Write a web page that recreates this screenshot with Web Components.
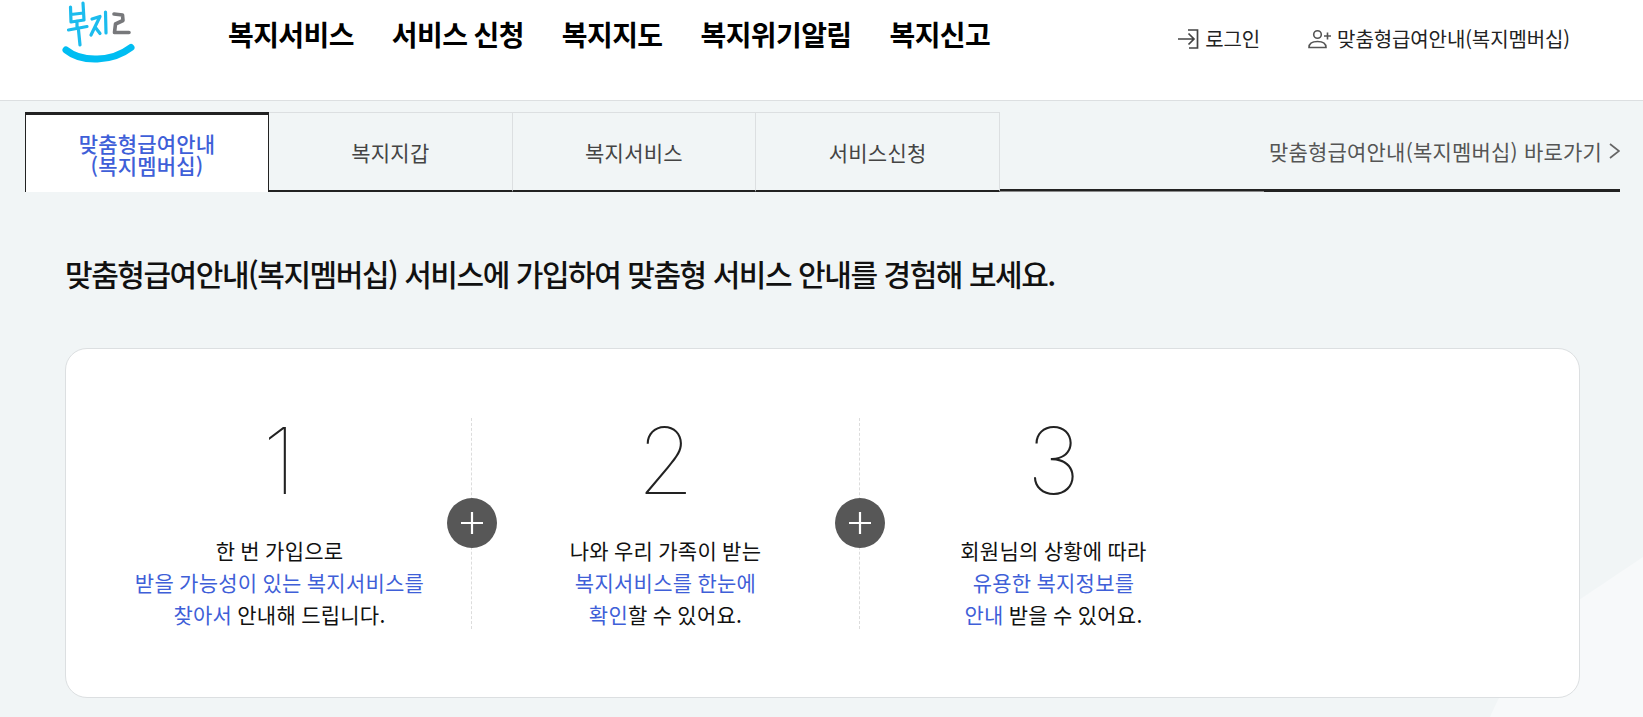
<!DOCTYPE html>
<html lang="ko"><head><meta charset="utf-8"><style>
html,body{margin:0;padding:0;height:717px;overflow:hidden;background:#f1f5f6;}
body{font-family:"Noto Sans CJK KR","Noto Sans",sans-serif;color:#111;}
</style></head><body>
<site-header></site-header>
<welfare-page></welfare-page>
<script>
function def(name,html){customElements.define(name,class extends HTMLElement{constructor(){super();this.attachShadow({mode:'open'}).innerHTML=html;}});}
def('brand-logo',`<style>:host{display:block;width:80px;height:70px}svg{display:block}</style>
<svg width="80" height="70" viewBox="60 0 80 70" fill="none" stroke-linecap="round" stroke-linejoin="round"><g stroke="#1bbcee" stroke-width="3.2">
<path d="M70.5 7L71 22M83 3L84 20M71 14.5L83.5 13M71 22L84 20M77 21V27M68.5 30L87 26.5M78.5 30L80 45"/>
<path d="M92 19L100 16.5L91 35M95 27L100 33.5M105.5 12L106 33"/></g>
<path d="M114 14L122.5 15L123 20.5L115.5 24L114.5 32.5L129 32.5" stroke="#77787b" stroke-width="3.6"/>
<path d="M66 50C82 63 112 62 131 47.5" stroke="#00bdf2" stroke-width="7"/></svg>`);
def('site-header',`<style>:host{display:flex;height:100px;background:#fff;border-bottom:1px solid #dcdfe1}
.logo{margin-left:60px;width:168px}
nav{display:flex;gap:38px;font-size:28px;font-weight:700;line-height:40px;height:40px;margin-top:14px;color:#000;letter-spacing:-.6px;word-spacing:-1px;white-space:nowrap}
.util{display:flex;gap:48px;font-size:20px;line-height:28px;margin:25px 73px 0 auto;height:28px;color:#222;letter-spacing:-.1px;white-space:nowrap}
.util span{display:flex;align-items:center;gap:6px}
.util span+span{gap:5px}
</style><div class="logo"><brand-logo></brand-logo></div>
<nav><span>복지서비스</span><span>서비스 신청</span><span>복지지도</span><span>복지위기알림</span><span>복지신고</span></nav>
<div class="util"><span><svg width="21" height="22" viewBox="0 0 21 22" fill="none" stroke="#444" stroke-width="1.7"><path d="M0 11H16M10.5 5.5L16 11L10.5 16.5M10 2H19.5V20H11"/></svg>로그인</span>
<span><svg width="24" height="22" viewBox="0 0 24 22" fill="none" stroke="#555" stroke-width="1.6"><circle cx="9.5" cy="6.5" r="3.8"/><path d="M1 19.5C1 15.5 4.5 13.5 9.5 13.5S18 15.5 18 19.5ZM16 8H23M19.5 4.5V11.5"/></svg>맞춤형급여안내(복지멤버십)</span></div>`);
def('tab-bar',`<style>:host{display:flex;height:80px;margin:11px 23px 0 25px;align-items:stretch}
.fill{flex:1;border-bottom:2px solid #222;margin-bottom:1px;box-shadow:0 1px 0 #8a8a8a}
.link{width:356px;box-sizing:border-box;border-bottom:3px solid #222;display:flex;justify-content:flex-end;align-items:center;font-size:21px;color:#555;letter-spacing:.2px;white-space:nowrap}
.link svg{margin-left:7px;flex:none}
</style><slot></slot><div class="fill"></div><div class="link"><span>맞춤형급여안내(복지멤버십) 바로가기</span><svg width="11" height="16" viewBox="0 0 11 16" fill="none" stroke="#666" stroke-width="1.7"><path d="M1 1L10 8L1 15"/></svg></div>`);
def('tab-item',`<style>:host{display:flex;width:243.67px;flex:none;box-sizing:border-box;align-items:center;justify-content:center;text-align:center;font-size:21px;line-height:22px;letter-spacing:.25px;color:#444;border-top:1px solid #dcdfe1;border-right:1px solid #dcdfe1;border-bottom:2px solid #222}
:host([active]){background:#fff;color:#3f5fd8;font-weight:500;border:0;border-left:1.5px solid #222;border-right:1.5px solid #222;border-top:3px solid #222;width:244px;letter-spacing:.2px}
</style><slot></slot>`);
def('step-sep',`<style>:host{display:block;flex:none;width:0;height:211px;border-left:1px dashed #dcdcdc;position:relative}
i{position:absolute;left:-25px;top:80px;width:50px;height:50px;border-radius:50%;background:#575757;display:flex;align-items:center;justify-content:center}
</style><i><svg width="24" height="24" viewBox="0 0 24 24" stroke="#fff" stroke-width="2.2"><path d="M1 12H23M12 1V23"/></svg></i>`);
customElements.define('welfare-step',class extends HTMLElement{constructor(){super();const s=this.attachShadow({mode:'open'});s.innerHTML=`<style>:host{display:block;flex:none;width:387px;text-align:center;height:211px}
.n{font-family:"Inter","Noto Sans",sans-serif;font-weight:100;font-size:92px;line-height:86px;height:116px;color:#222}
p{margin:0;font-size:21px;line-height:32px;color:#111;letter-spacing:.25px;word-spacing:-1px;white-space:nowrap}
</style><div class="n">${this.getAttribute('n')}</div><p><slot></slot></p>`;}});
def('welfare-page',`<style>:host{display:block;position:relative;height:616px;overflow:hidden}
.bg{position:absolute;left:0;top:0}
.in{position:relative}
h2{margin:61px 0 0 65px;font-size:30px;font-weight:500;line-height:40px;color:#111;letter-spacing:-1.45px;white-space:nowrap}
.card{margin:55px 63px 0 65px;height:350px;box-sizing:border-box;background:#fff;border:1px solid #dcdfe1;border-radius:22px;display:flex;padding:69px 0 0 22px}
</style>
<svg class="bg" width="1643" height="616" viewBox="0 0 1643 616"><path d="M1490 616C1510 570 1540 530 1579 499L1643 456V616Z" fill="#f7f9fa"/></svg>
<div class="in"><tab-bar><tab-item active>맞춤형급여안내<br>(복지멤버십)</tab-item><tab-item>복지지갑</tab-item><tab-item>복지서비스</tab-item><tab-item>서비스신청</tab-item></tab-bar>
<h2>맞춤형급여안내(복지멤버십) 서비스에 가입하여 맞춤형 서비스 안내를 경험해 보세요.</h2>
<div class="card"><step-group></step-group></div></div>`);
def('step-group',`<style>:host{display:flex}
.b{color:#3f5fd8}
</style>
<welfare-step n="1" style="width:383px">한 번 가입으로<br><span class="b">받을 가능성이 있는 복지서비스를</span><br><span class="b">찾아서</span> 안내해 드립니다.</welfare-step>
<step-sep></step-sep>
<welfare-step n="2">나와 우리 가족이 받는<br><span class="b">복지서비스를 한눈에</span><br><span class="b">확인</span>할 수 있어요.</welfare-step>
<step-sep></step-sep>
<welfare-step n="3">회원님의 상황에 따라<br><span class="b">유용한 복지정보를</span><br><span class="b">안내</span> 받을 수 있어요.</welfare-step>`);
</script></body></html>
